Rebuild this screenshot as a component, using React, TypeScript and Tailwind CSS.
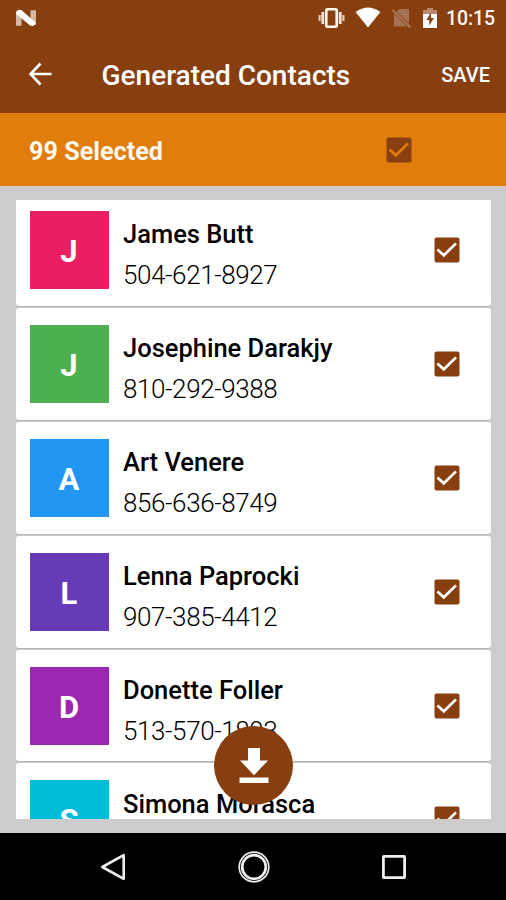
import React from "react";

type Contact = { name: string; phone?: string; color: string };

const contacts: Contact[] = [
  { name: "James Butt", phone: "504-621-8927", color: "bg-[#e91e63]" },
  { name: "Josephine Darakjy", phone: "810-292-9388", color: "bg-[#4caf50]" },
  { name: "Art Venere", phone: "856-636-8749", color: "bg-[#2196f3]" },
  { name: "Lenna Paprocki", phone: "907-385-4412", color: "bg-[#673ab7]" },
  { name: "Donette Foller", phone: "513-570-1893", color: "bg-[#9c27b0]" },
  { name: "Simona Morasca", color: "bg-[#00bcd9]" },
];

function Checkbox({ box, tick }: { box: string; tick: string }) {
  return (
    <svg width="26" height="26" viewBox="0 0 26 26" className="block shrink-0">
      <rect x="0.5" y="0.5" width="25" height="25" rx="2" fill={box} />
      <path d="M3.4 12.4 L9.800 18.300 L22 6.4" fill="none" stroke={tick} strokeWidth="2.7" />
    </svg>
  );
}

function StatusBar() {
  return (
    <div className="flex h-9 items-center justify-between pl-[15px] pr-[11px]">
      <svg width="22" height="18" viewBox="0 0 22 18" className="-mt-[1px]">
        <path d="M1 2.200h5.500v14.500H1zM15.500 1.200H21v14.500h-5.500z" fill="#d3b9a5" />
        <path d="M1 4.800Q1.500 1 4.500 .8Q6.200 .7 7.500 1.900L20.600 13.400Q20 16.800 17 17Q15.500 17 14.500 16.100Z" fill="#fff" />
      </svg>
      <div className="flex items-center">
        <svg width="27" height="22" viewBox="0 0 27 22" className="-mt-[1px] mr-[10px]">
          <rect x="8.300" y="2.300" width="10.400" height="17.400" rx="1" fill="none" stroke="#fff6ee" strokeWidth="2.600" />
          <path d="M4.800 5v12M22.200 5v12" stroke="#f3e4da" strokeWidth="2.800" />
          <path d="M1.600 8v6M25.400 8v6" stroke="#e3cbbb" strokeWidth="2.200" />
        </svg>
        <svg width="26" height="21" viewBox="0 0 26 21" className="-mt-[2px] mr-[10px]">
          <path d="M.6 5Q13-4 25.400 5L13 20.500Z" fill="#fff" />
        </svg>
        <svg width="22" height="22" viewBox="0 0 22 22" className="-mt-[1px] mr-[9px]">
          <path d="M8.500 2H18v14.500L5.800 4.700ZM3 6.500L16 19.500H3Z" fill="#a67254" />
          <path d="M1.500 3L19.500 20.500" stroke="#ab7758" strokeWidth="1.800" />
        </svg>
        <svg width="16" height="22" viewBox="0 0 16 22" className="-mt-[1px] mr-[8px]">
          <path d="M5 1h6v2h4v5H1V3h4Z" fill="#b88b70" />
          <path d="M1 7h14v14H1Z" fill="#fff" />
          <path d="M9 5.500L4.300 13H7.300V18.500L12 11H9Z" fill="#883f10" />
        </svg>
        <span className="pt-[2px] text-[19.500px] font-medium leading-none tracking-[-0.100px] text-[#fff7f2]">10:15</span>
      </div>
    </div>
  );
}

function AppBar() {
  return (
    <div className="flex h-[77px] items-center pl-[28px] pr-[16px] text-white">
      <svg width="25" height="24" viewBox="0 0 25 24" fill="none" stroke="#fff" strokeWidth="2.600" className="-mt-[2px]">
        <path d="M12.500 1.500L2.500 12L12.500 22.500M2.500 12H23.500" />
      </svg>
      <h1 className="ml-[48.500px] pt-[3px] text-[28px] font-medium leading-none">Generated Contacts</h1>
      <button className="ml-auto text-[20px] font-medium leading-none">SAVE</button>
    </div>
  );
}

function ContactCard({ contact }: { contact: Contact }) {
  return (
    <div className="flex h-[111.900px] shrink-0 items-center rounded-[3px] bg-white pl-[14px] pr-[30.500px] shadow-[0_1px_1px_#b3b3b3]">
      <div className={`flex h-[78px] w-[79px] items-center justify-center pt-[3px] text-[31px] font-bold leading-none text-white ${contact.color}`}>
        {contact.name[0]}
      </div>
      <div className="ml-[14.500px] flex flex-col gap-[11px] pt-[10px] text-black">
        <div className="text-[25.500px] font-medium leading-[30px]">{contact.name}</div>
        <div className="h-[30px] text-[26px] font-light leading-[30px] tracking-[-0.400px]">{contact.phone}</div>
      </div>
      <div className="ml-auto">
        <Checkbox box="#883f10" tick="#fff" />
      </div>
    </div>
  );
}

function NavBar() {
  return (
    <div className="flex h-[67px] items-center justify-between bg-black pl-[100px] pr-[99px]">
      <svg width="26" height="28" viewBox="0 0 26 28" fill="none" stroke="#eee" strokeWidth="2.600" strokeLinejoin="round">
        <path d="M2.300 14L23.700 2.200V25.800Z" />
      </svg>
      <svg width="34" height="34" viewBox="0 0 34 34" fill="none" stroke="#eee">
        <circle cx="17" cy="17" r="14.800" strokeWidth="1.700" />
        <circle cx="17" cy="17" r="11.800" strokeWidth="2.700" />
      </svg>
      <svg width="26" height="26" viewBox="0 0 26 26" fill="none" stroke="#eee" strokeWidth="2.800">
        <rect x="2.400" y="2.400" width="21.200" height="21.200" rx="0.500" />
      </svg>
    </div>
  );
}

export default function App() {
  return (
    <div className="relative flex h-[900px] w-[506px] flex-col overflow-hidden bg-[#cccccc] font-['Roboto',sans-serif]">
      <header className="h-[113px] shrink-0 bg-[#883f10]">
        <StatusBar />
        <AppBar />
      </header>
      <section className="flex h-[73px] shrink-0 items-center bg-[#e07d0c] pl-[29px] pr-[94px]">
        <span className="pt-[4px] text-[25.200px] font-bold leading-none text-[#fff8ee]">99 Selected</span>
        <div className="ml-auto">
          <Checkbox box="#884010" tick="#e07d0c" />
        </div>
      </section>
      <main className="h-[648px] grow px-[15.500px] pt-[14px]">
        <div className="h-[619px] overflow-hidden">
          <div className="-mt-[6px] flex flex-col gap-[2px]">
            {contacts.map((c) => (
              <ContactCard key={c.name} contact={c} />
            ))}
          </div>
        </div>
      </main>
      <button className="absolute left-[214px] top-[726px] flex size-[79px] items-center justify-center rounded-full bg-[#883f10]">
        <svg width="32" height="38" viewBox="0 0 32 38" fill="#fff">
          <path d="M10 1H22V13.500H30L16 28.300L2 13.500H10Z" />
          <rect x="1.500" y="30.500" width="29" height="5.500" />
        </svg>
      </button>
      <NavBar />
    </div>
  );
}
